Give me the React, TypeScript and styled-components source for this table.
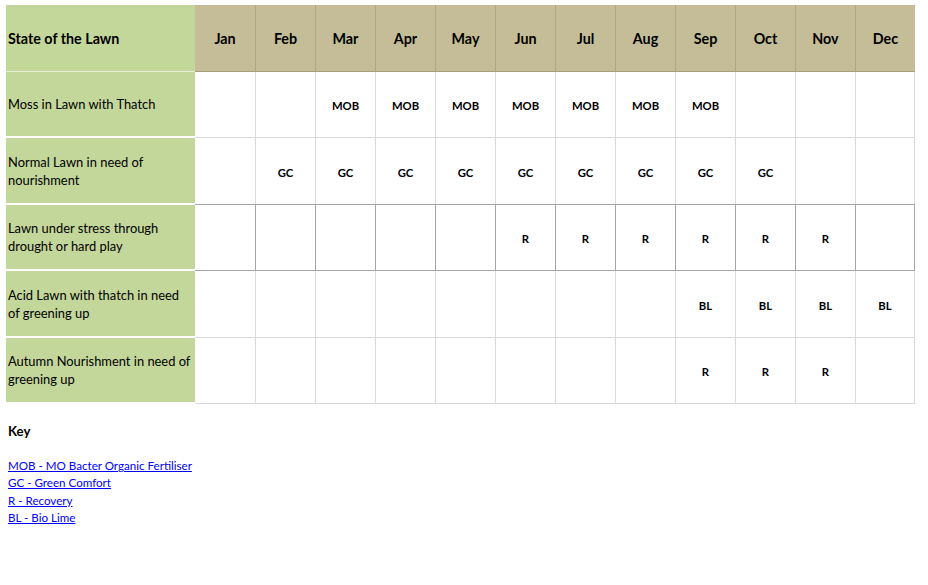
import styled, { createGlobalStyle } from 'styled-components';
import { Fragment } from 'react';

const GlobalStyle = createGlobalStyle`
  body {
    margin: 0;
    background: #ffffff;
    font-family: Lato, 'Liberation Sans', sans-serif;
    color: #000000;
  }
`;

const months = ['Jan', 'Feb', 'Mar', 'Apr', 'May', 'Jun', 'Jul', 'Aug', 'Sep', 'Oct', 'Nov', 'Dec'];

type Row = { label: string; codes: string[]; strong?: boolean };

const rows: Row[] = [
  { label: 'Moss in Lawn with Thatch', codes: ['', '', 'MOB', 'MOB', 'MOB', 'MOB', 'MOB', 'MOB', 'MOB', '', '', ''] },
  { label: 'Normal Lawn in need of nourishment', codes: ['', 'GC', 'GC', 'GC', 'GC', 'GC', 'GC', 'GC', 'GC', 'GC', '', ''] },
  { label: 'Lawn under stress through drought or hard play', codes: ['', '', '', '', '', 'R', 'R', 'R', 'R', 'R', 'R', ''], strong: true },
  { label: 'Acid Lawn with thatch in need of greening up', codes: ['', '', '', '', '', '', '', '', 'BL', 'BL', 'BL', 'BL'] },
  { label: 'Autumn Nourishment in need of greening up', codes: ['', '', '', '', '', '', '', '', 'R', 'R', 'R', ''] },
];

const keys = [
  'MOB - MO Bacter Organic Fertiliser',
  'GC - Green Comfort',
  'R - Recovery',
  'BL - Bio Lime',
];

function App(): JSX.Element {
  return (
    <Page>
      <GlobalStyle />
      <Grid>
        <TitleCell>State of the Lawn</TitleCell>
        {months.map((m, i) => (
          <MonthCell key={m} $first={i === 0}>
            {m}
          </MonthCell>
        ))}
        {rows.map((r) => (
          <Fragment key={r.label}>
            <LabelCell>{r.label}</LabelCell>
            {r.codes.map((c, i) => (
              <DataCell key={r.label + i} $strong={r.strong} $first={i === 0} $last={i === 11}>
                {c}
              </DataCell>
            ))}
          </Fragment>
        ))}
      </Grid>
      <Key>
        <KeyTitle>Key</KeyTitle>
        <KeyList>
          {keys.map((k) => (
            <KeyLink key={k} href="#">
              {k}
            </KeyLink>
          ))}
        </KeyList>
      </Key>
    </Page>
  );
}

export default App;

const Page = styled.div`
  padding: 5px 0 0 6px;
  width: 928px;
  height: 585px;
  box-sizing: border-box;
`;

const Grid = styled.div`
  display: grid;
  grid-template-columns: 189px repeat(12, 60px);
  grid-template-rows: 67px 66px 67px 66px 67px 66px;
  width: 910px;
`;

const TitleCell = styled.div`
  background: #c4d79b;
  display: flex;
  align-items: center;
  padding: 0 3px 0 2px;
  font-size: 14.3px;
  font-weight: 700;
  border-bottom: 1px solid #e6efd4;
`;

const MonthCell = styled.div<{ $first?: boolean }>`
  background: #c4bd97;
  display: flex;
  align-items: center;
  justify-content: center;
  padding-top: 1px;
  font-size: 14.3px;
  font-weight: 700;
  border-left: ${({ $first }) => ($first ? 'none' : '1px solid #aea881')};
  border-bottom: 1px solid #a69f7c;
`;

const LabelCell = styled.div`
  background: #c4d79b;
  display: flex;
  align-items: center;
  padding: 0 2px 0 2px;
  font-size: 12.9px;
  line-height: 18px;
  border-bottom: 2px solid #ffffff;
`;

const DataCell = styled.div<{ $strong?: boolean; $first?: boolean; $last?: boolean }>`
  --line: ${({ $strong }) => ($strong ? '#a6a6a6' : '#d9d9d9')};
  display: flex;
  align-items: center;
  justify-content: center;
  padding-top: 2px;
  font-size: 11.3px;
  font-weight: 700;
  border-left: ${({ $first }) => ($first ? 'none' : '1px solid var(--line)')};
  border-right: ${({ $last }) => ($last ? '1px solid var(--line)' : 'none')};
  border-bottom: 1px solid var(--line);
  margin-top: ${({ $strong }) => ($strong ? '-1px' : '0')};
  border-top: ${({ $strong }) => ($strong ? '1px solid #a6a6a6' : 'none')};
`;

const Key = styled.div`
  padding: 18px 0 0 2px;
`;

const KeyTitle = styled.div`
  font-size: 13.2px;
  font-weight: 700;
  line-height: 18px;
`;

const KeyList = styled.div`
  display: flex;
  flex-direction: column;
  margin-top: 17px;
`;

const KeyLink = styled.a`
  color: #0000ff;
  font-size: 11.6px;
  line-height: 17.3px;
  text-decoration: underline;
  align-self: flex-start;
`;
